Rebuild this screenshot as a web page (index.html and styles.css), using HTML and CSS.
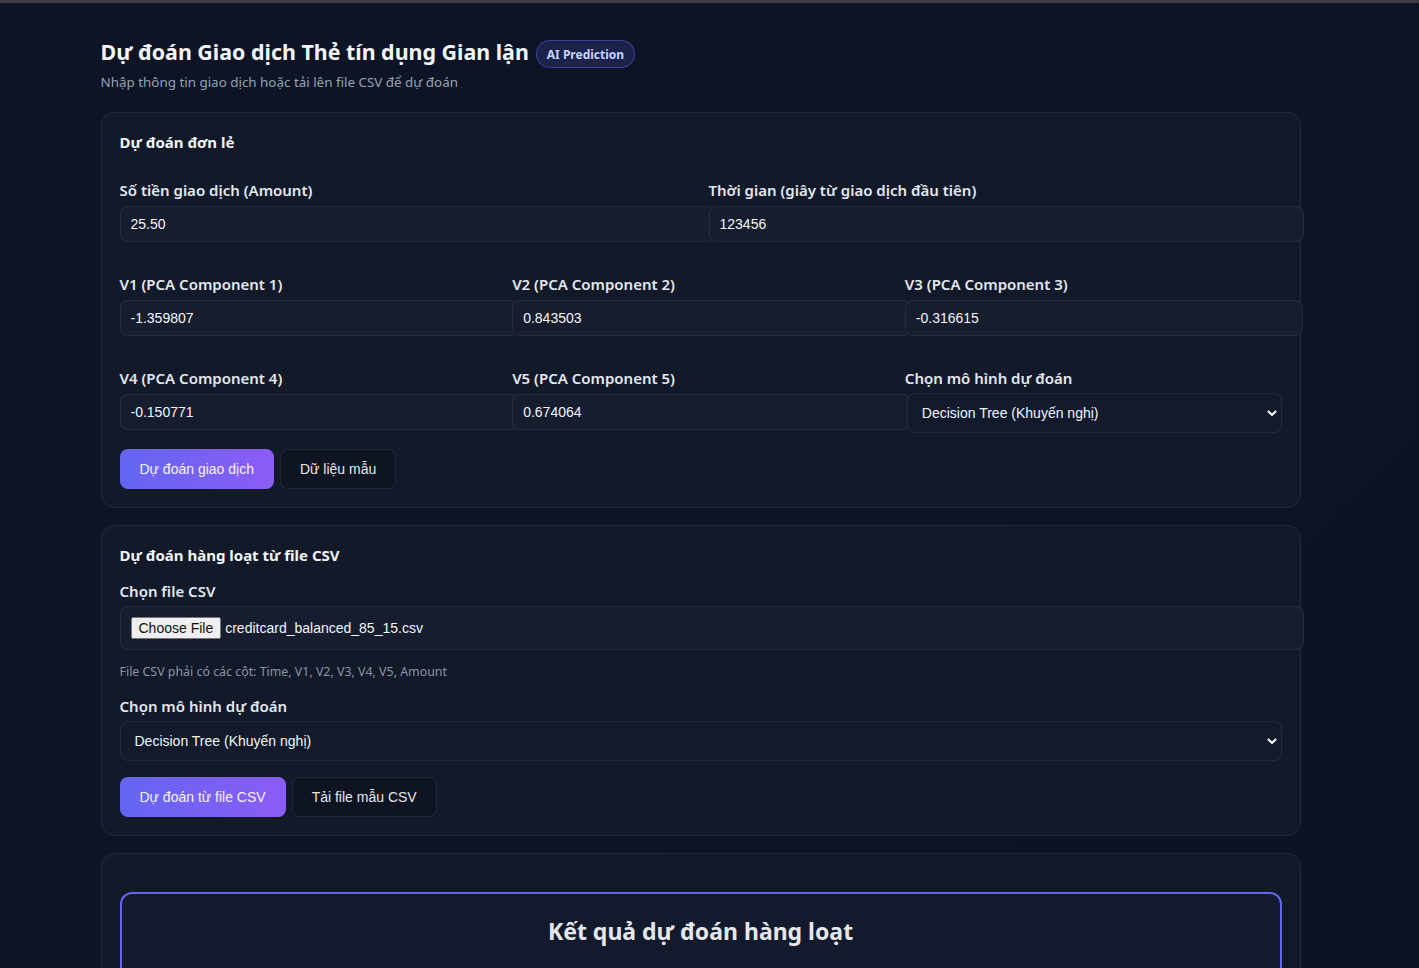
FILE: index.html
```html
<!DOCTYPE html>
<html lang="vi">
<head>
<meta charset="utf-8">
<title>Dự đoán Giao dịch Thẻ tín dụng Gian lận</title>
<link rel="stylesheet" href="styles.css">
</head>
<body>
<div class="topline"></div>
<main class="container">
  <header class="page-header">
    <h1 class="title">Dự đoán Giao dịch Thẻ tín dụng Gian lận <span class="badge">AI Prediction</span></h1>
    <p class="subtitle">Nhập thông tin giao dịch hoặc tải lên file CSV để dự đoán</p>
  </header>

  <section class="card">
    <h2 class="card-title first">Dự đoán đơn lẻ</h2>
    <div class="grid grid-2">
      <div class="field">
        <label class="label">Số tiền giao dịch (Amount)</label>
        <input class="input" type="text" value="25.50">
      </div>
      <div class="field">
        <label class="label">Thời gian (giây từ giao dịch đầu tiên)</label>
        <input class="input" type="text" value="123456">
      </div>
    </div>
    <div class="grid grid-3">
      <div class="field">
        <label class="label">V1 (PCA Component 1)</label>
        <input class="input" type="text" value="-1.359807">
      </div>
      <div class="field">
        <label class="label">V2 (PCA Component 2)</label>
        <input class="input" type="text" value="0.843503">
      </div>
      <div class="field">
        <label class="label">V3 (PCA Component 3)</label>
        <input class="input" type="text" value="-0.316615">
      </div>
    </div>
    <div class="grid grid-3 last-row">
      <div class="field">
        <label class="label">V4 (PCA Component 4)</label>
        <input class="input" type="text" value="-0.150771">
      </div>
      <div class="field">
        <label class="label">V5 (PCA Component 5)</label>
        <input class="input" type="text" value="0.674064">
      </div>
      <div class="field">
        <label class="label">Chọn mô hình dự đoán</label>
        <select class="select select-inline">
          <option>Decision Tree (Khuyến nghị)</option>
        </select>
      </div>
    </div>
    <div class="actions">
      <button class="btn btn-primary">Dự đoán giao dịch</button>
      <button class="btn btn-secondary">Dữ liệu mẫu</button>
    </div>
  </section>

  <section class="card">
    <h2 class="card-title">Dự đoán hàng loạt từ file CSV</h2>
    <label class="label tight">Chọn file CSV</label>
    <div class="file-box">
      <span class="file-btn">Choose File</span>
      <span class="file-name">creditcard_balanced_85_15.csv</span>
    </div>
    <p class="hint">File CSV phải có các cột: Time, V1, V2, V3, V4, V5, Amount</p>
    <label class="label tight">Chọn mô hình dự đoán</label>
    <select class="select select-block">
      <option>Decision Tree (Khuyến nghị)</option>
    </select>
    <div class="actions">
      <button class="btn btn-primary">Dự đoán từ file CSV</button>
      <button class="btn btn-secondary">Tải file mẫu CSV</button>
    </div>
  </section>

  <section class="card">
    <div class="result">
      <h2 class="result-title">Kết quả dự đoán hàng loạt</h2>
    </div>
  </section>
</main>
</body>
</html>
```

FILE: styles.css
```css
* { box-sizing: border-box; }

html, body {
  margin: 0;
  padding: 0;
}

body {
  min-height: 100vh;
  background: linear-gradient(135deg, #0e1426 0%, #0d1425 45%, #0b1220 100%);
  color: #e5e7eb;
  font-family: "Noto Sans", "Open Sans", sans-serif;
  padding-right: 18px;
  overflow: hidden;
}

.topline {
  height: 3px;
  background: #3a3c40;
  margin-right: -18px;
}

.container {
  width: 1200px;
  margin: 0 auto;
  padding-top: 34px;
}

.page-header {
  margin-bottom: 21px;
}

.title {
  margin: 0;
  height: 30px;
  font-size: 21.4px;
  font-weight: 700;
  color: #f1f5f9;
  display: flex;
  align-items: center;
  gap: 7px;
  line-height: 30px;
}

.badge {
  display: inline-block;
  font-size: 12px;
  font-weight: 700;
  line-height: 16px;
  color: #c7d2fe;
  background: rgba(99, 102, 241, 0.18);
  border: 1px solid rgba(99, 102, 241, 0.45);
  border-radius: 999px;
  padding: 6px 10px 4px 10px;
  margin-top: 4px;
}

.subtitle {
  margin: 6px 0 0 0;
  font-size: 13.4px;
  color: #94a3b8;
  line-height: 18px;
}

.card {
  background: #121929;
  border: 1px solid rgba(148, 163, 184, 0.12);
  border-radius: 14px;
  padding: 18px 18px 18px 18px;
  margin-bottom: 17px;
}

.card-title {
  margin: 0 0 15px 0;
  font-size: 15px;
  font-weight: 700;
  line-height: 22px;
  color: #f1f5f9;
}

.card-title.first {
  margin-bottom: 27px;
}

.grid {
  display: grid;
  gap: 16px;
  margin-bottom: 32px;
}

.grid.last-row {
  margin-bottom: 16px;
}

.grid-2 { grid-template-columns: 1fr 1fr; }
.grid-3 { grid-template-columns: 1fr 1fr 1fr; }

.field {
  min-width: 0;
}

.label {
  display: block;
  font-size: 15px;
  font-weight: 600;
  line-height: 20px;
  color: #e2e8f0;
  margin-bottom: 6px;
}

.label.tight {
  margin-bottom: 5px;
}

.input {
  box-sizing: content-box;
  display: block;
  width: 100%;
  height: 16px;
  padding: 9px 10px;
  border: 1px solid rgba(148, 163, 184, 0.12);
  border-radius: 8px;
  background: #161d2e;
  color: #f1f5f9;
  font-family: "Liberation Sans", Arial, sans-serif;
  font-size: 14px;
  outline: none;
}

.select {
  display: block;
  width: 100%;
  height: 40px;
  -webkit-appearance: none;
  appearance: none;
  border: 1px solid rgba(148, 163, 184, 0.12);
  border-radius: 8px;
  background-color: #131a2b;
  background-image: url("data:image/svg+xml;utf8,<svg xmlns='http://www.w3.org/2000/svg' width='10' height='7' viewBox='0 0 10 7'><path d='M1.5 1.5l3.5 3.5 3.5-3.5' fill='none' stroke='white' stroke-width='2' stroke-linecap='round' stroke-linejoin='round'/></svg>");
  background-repeat: no-repeat;
  background-position: right 4px center;
  color: #f1f5f9;
  font-family: "Liberation Sans", Arial, sans-serif;
  font-size: 14px;
  padding: 0 30px 0 14px;
  outline: none;
}

.select-inline {
  margin-left: 2px;
  margin-right: -1px;
  margin-top: -1px;
  width: calc(100% - 1px);
}

.file-box {
  width: calc(100% + 22px);
  height: 44px;
  border: 1px solid rgba(148, 163, 184, 0.12);
  border-radius: 8px;
  background: #161d2e;
  display: flex;
  align-items: center;
  padding: 0 10px;
  font-family: "Liberation Sans", Arial, sans-serif;
  font-size: 14px;
  color: #f1f5f9;
}

.file-btn {
  display: inline-block;
  background: #efefef;
  color: #111;
  border: 1px solid #767676;
  border-radius: 2px;
  padding: 2px 7px;
  line-height: 16px;
  font-size: 14px;
  margin-right: 4px;
}

.hint {
  margin: 14px 0 16px 0;
  font-size: 12.4px;
  line-height: 16px;
  color: #8a94a6;
}

.select-block {
  margin-bottom: 16px;
}

.actions {
  display: flex;
  gap: 6px;
}

.btn {
  height: 40px;
  border-radius: 8px;
  font-family: "Liberation Sans", Arial, sans-serif;
  font-size: 14px;
  padding: 0 20px;
  cursor: pointer;
}

.btn-primary {
  border: none;
  color: #f5f3ff;
  background: linear-gradient(90deg, #6366f1 0%, #8b5cf6 100%);
}

.btn-secondary {
  border: 1px solid rgba(148, 163, 184, 0.14);
  background: #0e1421;
  color: #e5e7eb;
  padding: 0 19px;
}

.result {
  margin-top: 20px;
  border: 2px solid #6366f1;
  border-radius: 12px;
  background: #141a2e;
  min-height: 300px;
  padding-top: 20px;
}

.result-title {
  margin: 0;
  text-align: center;
  font-size: 23px;
  font-weight: 700;
  color: #e5e7eb;
  line-height: 34px;
}
```
